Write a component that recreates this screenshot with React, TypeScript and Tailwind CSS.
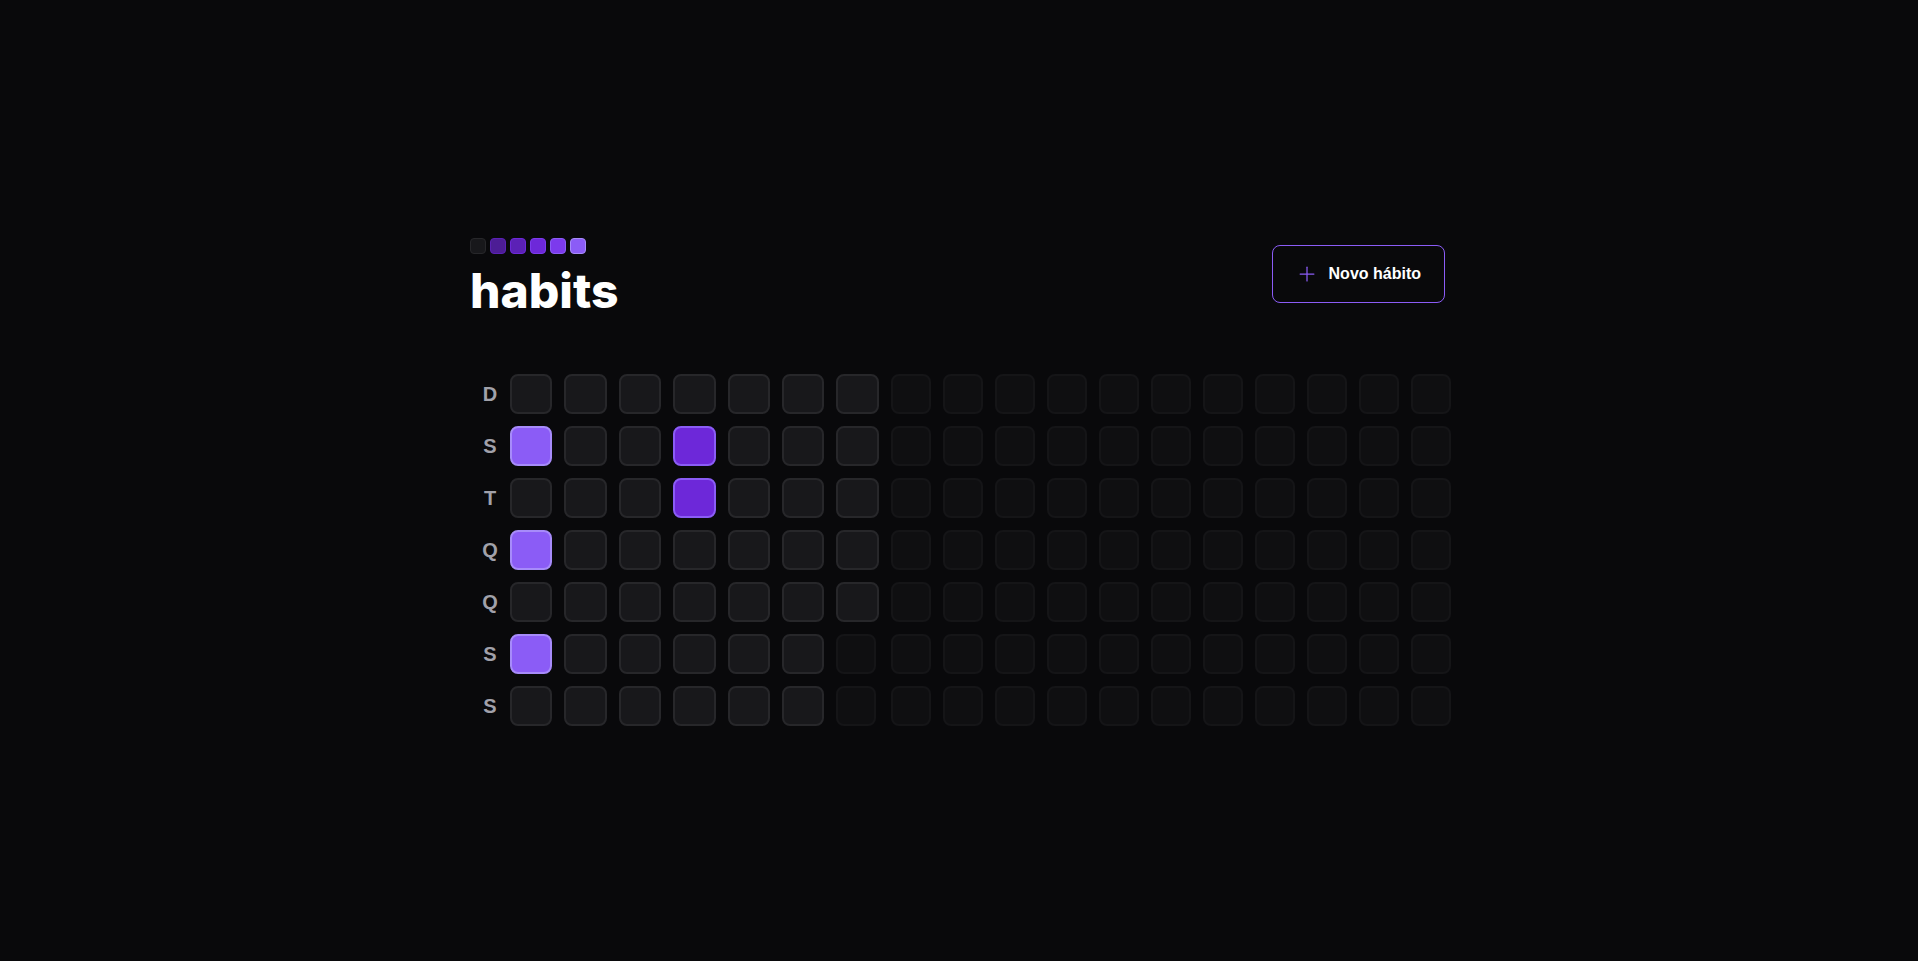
const weekDays = ["D", "S", "T", "Q", "Q", "S", "S"];

// completion levels keyed by "col-row"
const filled: Record<string, "light" | "dark"> = {
  "0-1": "light",
  "0-3": "light",
  "0-5": "light",
  "3-1": "dark",
  "3-2": "dark",
};

const TOTAL_COLUMNS = 18;
const ELAPSED_DAYS = 47;

function Logo() {
  const squares = [
    "bg-[#18181b] border-[#27272a]",
    "bg-[#4c1d95] border-[#5b21b6]",
    "bg-[#5b21b6] border-[#6d28d9]",
    "bg-[#6d28d9] border-[#7c3aed]",
    "bg-[#7c3aed] border-[#8b5cf6]",
    "bg-[#8b5cf6] border-[#a78bfa]",
  ];
  return (
    <div className="flex flex-col h-[72px]">
      <div className="flex gap-1">
        {squares.map((cls, i) => (
          <div key={i} className={`w-4 h-4 rounded-[4px] border ${cls}`} />
        ))}
      </div>
      <h1 className="mt-[13px] text-[48px] leading-none font-extrabold text-white font-['Inter',sans-serif]">
        habits
      </h1>
    </div>
  );
}

function PlusIcon() {
  return (
    <svg width="20" height="20" viewBox="0 0 256 256" className="text-[#8b5cf6]">
      <line x1="40" y1="128" x2="216" y2="128" stroke="currentColor" strokeWidth="16" strokeLinecap="round" />
      <line x1="128" y1="40" x2="128" y2="216" stroke="currentColor" strokeWidth="16" strokeLinecap="round" />
    </svg>
  );
}

function HabitDay({ index }: { index: number }) {
  const col = Math.floor(index / 7);
  const row = index % 7;
  if (index >= ELAPSED_DAYS) {
    return <div className="w-10 h-10 bg-[#18181b] border-2 border-[#27272a] rounded-lg opacity-40" />;
  }
  const level = filled[`${col}-${row}`];
  const cls =
    level === "light"
      ? "bg-[#8b5cf6] border-[#a78bfa]"
      : level === "dark"
      ? "bg-[#6d28d9] border-[#8b5cf6]"
      : "bg-[#18181b] border-[#27272a]";
  return <div className={`w-[42.4px] h-10 border-2 rounded-lg ${cls}`} />;
}

export default function App() {
  const days = Array.from({ length: TOTAL_COLUMNS * 7 }, (_, i) => i);

  return (
    <div className="w-screen h-screen pt-[3px] bg-[#09090b] text-white flex justify-center items-center font-['Liberation_Sans',Arial,sans-serif]">
      <div className="w-full max-w-5xl pl-[23px] pr-[26px] flex flex-col gap-16">
        <div className="w-full flex items-center justify-between">
          <Logo />
          <button className="border border-[#8b5cf6] font-bold rounded-lg pl-6 pr-[23px] h-[58px] flex items-center gap-3 text-base">
            <PlusIcon />
            Novo hábito
          </button>
        </div>

        <div className="w-full flex">
          <div className="grid grid-rows-7 grid-flow-row gap-3">
            {weekDays.map((d, i) => (
              <div key={i} className="text-[#a1a1aa] text-xl h-10 w-10 font-bold flex items-center justify-center">
                {d}
              </div>
            ))}
          </div>
          <div className="grid grid-rows-7 grid-flow-col gap-3">
            {days.map((i) => (
              <HabitDay key={i} index={i} />
            ))}
          </div>
        </div>
      </div>
    </div>
  );
}
